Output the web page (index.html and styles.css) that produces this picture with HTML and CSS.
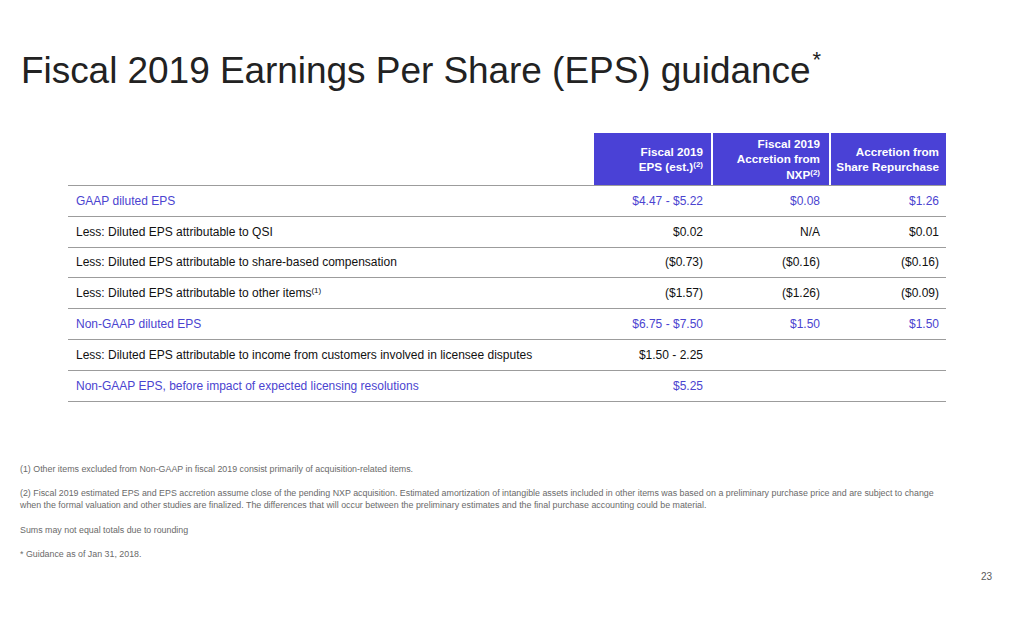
FILE: index.html
```html
<!DOCTYPE html>
<html>
<head>
<meta charset="utf-8">
<link rel="stylesheet" href="styles.css">
</head>
<body>
<div class="slide">
  <h1 class="title">Fiscal 2019 Earnings Per Share (EPS) guidance<sup>*</sup></h1>

  <div class="table">
    <div class="row head">
      <div class="cell label-cell"></div>
      <div class="cell hcell"><span>Fiscal 2019<br>EPS (est.)<sup>(2)</sup></span></div>
      <div class="cell hcell"><span>Fiscal 2019<br>Accretion from<br>NXP<sup>(2)</sup></span></div>
      <div class="cell hcell"><span>Accretion from<br>Share Repurchase</span></div>
    </div>
    <div class="row accent">
      <div class="cell label-cell">GAAP diluted EPS</div>
      <div class="cell num">$4.47 - $5.22</div>
      <div class="cell num">$0.08</div>
      <div class="cell num">$1.26</div>
    </div>
    <div class="row">
      <div class="cell label-cell">Less: Diluted EPS attributable to QSI</div>
      <div class="cell num">$0.02</div>
      <div class="cell num">N/A</div>
      <div class="cell num">$0.01</div>
    </div>
    <div class="row">
      <div class="cell label-cell">Less: Diluted EPS attributable to share-based compensation</div>
      <div class="cell num">($0.73)</div>
      <div class="cell num">($0.16)</div>
      <div class="cell num">($0.16)</div>
    </div>
    <div class="row">
      <div class="cell label-cell"><span>Less: Diluted EPS attributable to other items<sup>(1)</sup></span></div>
      <div class="cell num">($1.57)</div>
      <div class="cell num">($1.26)</div>
      <div class="cell num">($0.09)</div>
    </div>
    <div class="row accent">
      <div class="cell label-cell">Non-GAAP diluted EPS</div>
      <div class="cell num">$6.75 - $7.50</div>
      <div class="cell num">$1.50</div>
      <div class="cell num">$1.50</div>
    </div>
    <div class="row">
      <div class="cell label-cell">Less: Diluted EPS attributable to income from customers involved in licensee disputes</div>
      <div class="cell num">$1.50 - 2.25</div>
      <div class="cell num"></div>
      <div class="cell num"></div>
    </div>
    <div class="row accent">
      <div class="cell label-cell">Non-GAAP EPS, before impact of expected licensing resolutions</div>
      <div class="cell num">$5.25</div>
      <div class="cell num"></div>
      <div class="cell num"></div>
    </div>
  </div>

  <div class="notes">
    <p>(1) Other items excluded from Non-GAAP in fiscal 2019 consist primarily of acquisition-related items.</p>
    <p>(2) Fiscal 2019 estimated EPS and EPS accretion assume close of the pending NXP acquisition. Estimated amortization of intangible assets included in other items was based on a preliminary purchase price and are subject to change when the formal valuation and other studies are finalized. The differences that will occur between the preliminary estimates and the final purchase accounting could be material.</p>
    <p>Sums may not equal totals due to rounding</p>
    <p>* Guidance as of Jan 31, 2018.</p>
  </div>

  <div class="page-num">23</div>
</div>
</body>
</html>
```

FILE: styles.css
```css
html, body {
  margin: 0;
  padding: 0;
  background: #ffffff;
}

body {
  font-family: "Liberation Sans", Arial, sans-serif;
  color: #1a1a1a;
}

.slide {
  width: 1016px;
  height: 636px;
  box-sizing: border-box;
  padding: 46px 0 0 0;
  display: flex;
  flex-direction: column;
}

.title {
  margin: 0 0 0 21px;
  font-weight: normal;
  font-size: 37px;
  line-height: 50px;
  color: #222222;
  letter-spacing: -0.05px;
}

.title sup {
  font-size: 22px;
  vertical-align: 0;
  position: relative;
  top: -16px;
  margin-left: 2px;
}

.table {
  margin: 32px 0 0 68px;
  width: 878px;
  display: flex;
  flex-direction: column;
}

.row {
  display: grid;
  grid-template-columns: 526px 117px 118px 117px;
  box-sizing: border-box;
  height: 30.8px;
  border-bottom: 1.5px solid #9c9c9c;
  font-size: 12px;
  color: #111111;
}

.row.head {
  height: 53px;
}

.cell {
  display: flex;
  align-items: center;
}

.label-cell {
  padding-left: 8px;
}

.num {
  justify-content: flex-end;
}

.cell:nth-child(2) { padding-right: 8px; }
.cell:nth-child(3) { padding-right: 9px; }
.cell:nth-child(4) { padding-right: 7px; }

.hcell {
  background: #4a41d6;
  color: #ffffff;
  font-weight: bold;
  text-align: right;
  justify-content: flex-end;
  line-height: 15.5px;
  font-size: 11.7px;
}

.hcell + .hcell {
  border-left: 2px solid #ffffff;
}

.hcell sup, .label-cell sup {
  font-size: 8px;
  vertical-align: 0;
  position: relative;
  top: -4px;
  font-weight: normal;
  line-height: 0;
}

.hcell sup {
  font-weight: bold;
}

.row.accent {
  color: #4b44d0;
}

.notes {
  margin: 61px 0 0 20px;
  width: 930px;
  font-size: 8.85px;
  line-height: 12px;
  color: #6a6a6a;
}

.notes p {
  margin: 0 0 12.5px 0;
}

.page-num {
  margin: -2px 24px 0 auto;
  font-size: 10px;
  color: #5a5a5a;
}
```
